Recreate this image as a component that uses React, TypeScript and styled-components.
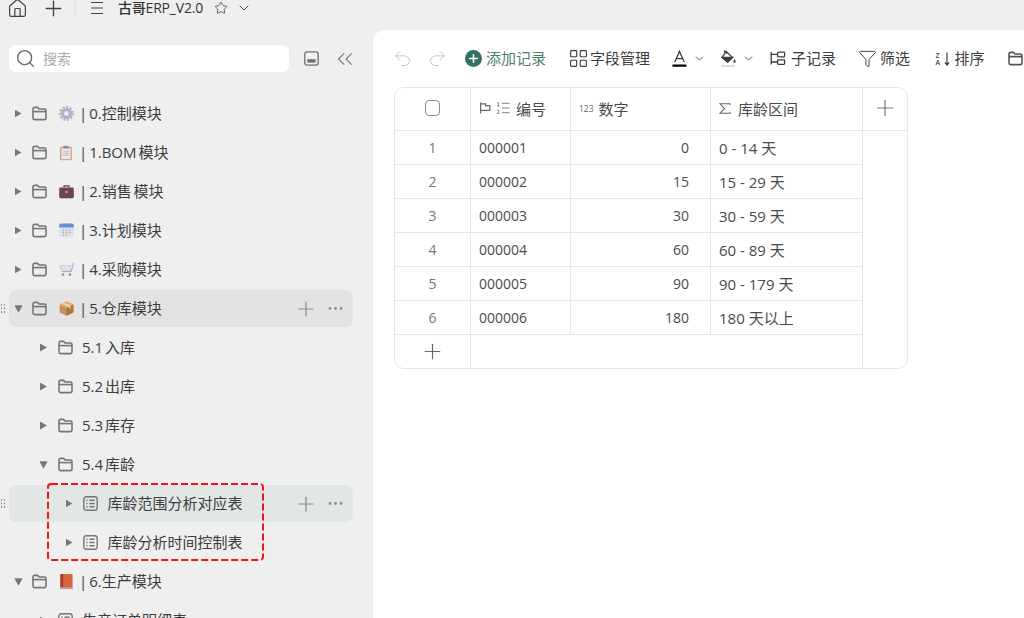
import React from "react";
import styled, { createGlobalStyle } from "styled-components";
import { House, Plus, Star, ChevronDown, Search, Undo2, Redo2, LayoutGrid, Funnel, ChevronsLeft, Ellipsis, ListOrdered } from "lucide-react";

const Global = createGlobalStyle`
  html, body { margin: 0; padding: 0; height: 100%; overflow: hidden; background: #efefef; }
  body { font-family: "Open Sans", "Noto Sans CJK SC", sans-serif; font-size: 15px; color: #3a3a3a; }
  * { box-sizing: border-box; }
`;

const Page = styled.div`
  width: 1024px; height: 618px; overflow: hidden; background: #efefef;
  display: flex; flex-direction: column;
`;
const TopBar = styled.div`
  height: 30px; flex: none; display: flex; align-items: flex-start; color: #444; padding-left: 6.5px;
`;
const TopIcon = styled.span<{ $ml?: number }>`
  display: inline-flex; height: 16px; align-items: center; margin-left: ${p => p.$ml ?? 0}px;
`;
const TopDivider = styled.span`
  width: 2px; height: 17px; background: #e6e6e6; margin-left: 8px;
`;
const Title = styled.span`
  font-size: 14px; line-height: 16px; font-weight: 500; margin-left: 13px; color: #333; white-space: nowrap;
  letter-spacing: -0.2px;
`;
const Body = styled.div`
  flex: 1; display: flex; min-height: 0;
`;
const Sidebar = styled.aside`
  width: 373px; flex: none; padding-top: 15px; display: flex; flex-direction: column; overflow: hidden;
`;
const SearchRow = styled.div`
  display: flex; align-items: center; padding-left: 9px; color: #777;
`;
const SearchBox = styled.div`
  width: 280px; height: 27px; border-radius: 6px; background: #fff; display: flex; align-items: center;
  padding-left: 6px; gap: 7px; color: #666; box-shadow: 0 0 0 1px #ececec;
`;
const Placeholder = styled.span`
  color: #aaa; font-size: 14px; padding-bottom: 2px;
`;
const Tree = styled.div`
  margin-top: 23px; display: flex; flex-direction: column; gap: 2px; position: relative;
`;
const Row = styled.div<{ $depth: number; $bg?: string }>`
  position: relative; flex: none; margin-left: 9px; width: 344px; height: 37px; border-radius: 7px;
  display: flex; align-items: center; padding-left: ${p => 5.5 + p.$depth * 25.5}px;
  background: ${p => p.$bg ?? "transparent"};
`;
const Arrow = styled.span<{ $open?: boolean }>`
  width: 7px; height: 8px; flex: none; margin-right: 10.5px; background: #777;
  clip-path: ${p => p.$open ? "polygon(0 12%, 100% 12%, 50% 88%)" : "polygon(0 0, 100% 50%, 0 100%)"};
  transform: ${p => p.$open ? "scale(1.2)" : "none"};
`;
const NodeIcon = styled.span`
  display: inline-flex; flex: none; color: #767676;
`;
const EmojiBox = styled.span`
  display: inline-flex; flex: none; margin-left: 11.5px; width: 15px; justify-content: center;
`;
const Label = styled.span<{ $ml: number }>`
  margin-left: ${p => p.$ml}px; white-space: nowrap; color: #3c3c3c; line-height: 20px;
  word-spacing: -2px; padding-bottom: 2px;
`;
const Actions = styled.span`
  margin-left: auto; padding-right: 8.5px; display: flex; align-items: center; gap: 7.5px; color: #8a8a8a;
`;
const Handle = styled.span`
  position: absolute; left: -9px; top: 13px; width: 6px; height: 11px;
  background-image: radial-gradient(circle, #8c8c8c 0.9px, transparent 1.1px);
  background-size: 3px 3.6px;
`;
const Callout = styled.svg`
  position: absolute; left: 47px; top: 388px; pointer-events: none; overflow: visible;
`;
const Main = styled.main`
  flex: 1; min-width: 0; background: #fff; border-top-left-radius: 12px; overflow: hidden; padding-left: 21px;
`;
const Toolbar = styled.div`
  height: 57px; display: flex; align-items: center; white-space: nowrap; color: #3c3c3c;
`;
const Tool = styled.span<{ $ml?: number; $color?: string; $gap?: number }>`
  display: inline-flex; align-items: center; gap: ${p => p.$gap ?? 5}px; flex: none; margin-left: ${p => p.$ml ?? 0}px;
  color: ${p => p.$color ?? "#3c3c3c"};
`;
const ToolText = styled.span`
  padding-bottom: 2px;
`;
const AddDot = styled.span`
  width: 17px; height: 17px; border-radius: 50%; background: #2f7263; color: #fff;
  display: inline-flex; align-items: center; justify-content: center; margin-right: -1px;
`;
const SortGlyph = styled.span`
  display: inline-flex; align-items: center; width: 14px; gap: 1px; color: #3c3c3c;
`;
const SortLetters = styled.span`
  display: flex; flex-direction: column; font-size: 7px; line-height: 7px; font-weight: 600; width: 7px;
`;
const Table = styled.div`
  width: 514px; border: 1px solid #e7e7ea; border-radius: 10px; overflow: hidden; display: grid;
  grid-template-columns: 76px 100px 140px 152px 44px;
  grid-template-rows: 43px repeat(6, 34px) 33px;
  color: #4a4a4a;
`;
const Cell = styled.div<{ $align?: string; $pr?: number; $last?: boolean; $span?: string; $size?: number; $noRight?: boolean }>`
  display: flex; align-items: center; white-space: nowrap; min-width: 0;
  justify-content: ${p => p.$align ?? "flex-start"};
  padding: 0 ${p => p.$pr ?? 9}px 0 ${p => (p.$align === "center" ? 0 : 8)}px;
  border-right: ${p => (p.$noRight ? "none" : "1px solid #e7e7ea")};
  border-bottom: ${p => (p.$last ? "none" : "1px solid #e7e7ea")};
  font-size: ${p => p.$size ?? 15}px;
  ${p => (p.$span ? `grid-column: ${p.$span};` : "")}
`;
const HeadCell = styled(Cell)`
  padding-bottom: 2px;
`;
const IndexCell = styled(Cell)`
  color: #777; font-size: 14px;
`;
const SideColumn = styled.div`
  grid-column: 5; grid-row: 2 / 9;
`;
const HeadIcons = styled.span<{ $mr?: number }>`
  display: inline-flex; align-items: center; gap: 4px; color: #666; margin-right: ${p => p.$mr ?? 5}px;
`;
const TypeTag = styled.span`
  font-size: 8.5px; color: #666; margin-right: 5px;
`;
const CheckBox = styled.span`
  width: 15.5px; height: 15.5px; border: 1.5px solid #8c8c92; border-radius: 4px;
`;

const FolderIcon = () => (
  <svg width="15" height="15" viewBox="0 0 15 15" fill="none" stroke="currentColor" strokeWidth="1.6">
    <path d="M1 3.2C1 2 1.7 1.4 2.6 1.4H5.6L7 3H12.4C13.4 3 14 3.7 14 4.6V12C14 13 13.4 13.6 12.4 13.6H2.6C1.7 13.6 1 13 1 12Z" />
    <path d="M1 5.6H14" />
  </svg>
);
const ListIcon = () => (
  <svg width="15" height="15" viewBox="0 0 15 15" fill="none" stroke="currentColor" strokeWidth="1.4">
    <rect x="0.8" y="0.8" width="13.4" height="13.4" rx="2.4" />
    <path d="M6.4 4.3H11.6M6.4 7.5H11.6M6.4 10.7H11.6M3.4 4.3H4.6M3.4 7.5H4.6M3.4 10.7H4.6" />
  </svg>
);
const Gear = () => (
  <svg width="15" height="15" viewBox="0 0 15 15">
    <circle cx="7.5" cy="7.5" r="5.6" fill="#b3afc6" />
    <circle cx="7.5" cy="7.5" r="6.5" fill="none" stroke="#b3afc6" strokeWidth="2" strokeDasharray="2 1.7" />
    <circle cx="7.5" cy="7.5" r="2.4" fill="#efeaf5" />
  </svg>
);
const Clipboard = () => (
  <svg width="14" height="16" viewBox="0 0 15 16">
    <rect x="1" y="1.4" width="13" height="14.4" rx="1.2" fill="#d9a77c" />
    <rect x="2.6" y="3" width="9.8" height="11.4" fill="#eceaf0" />
    <rect x="4.6" y="0.2" width="5.8" height="3" rx="0.8" fill="#8f8f9c" />
    <path d="M4 6H11M4 8.2H11M4 10.4H11" stroke="#b9b9c4" />
  </svg>
);
const Briefcase = () => (
  <svg width="15" height="15" viewBox="0 0 15 15">
    <path d="M5 3.6V1.8H10V3.6" fill="none" stroke="#6b4450" strokeWidth="1.2" />
    <rect x="0.2" y="3.4" width="14.6" height="10.8" rx="1.4" fill="#6d4451" />
    <rect x="6.3" y="7" width="2.4" height="2" fill="#d6a65f" />
  </svg>
);
const Calendar = () => (
  <svg width="15" height="15" viewBox="0 0 15 15">
    <rect x="0.2" y="0.6" width="14.6" height="14" rx="2" fill="#dfe0ee" />
    <path d="M0.2 4.6V2.6C0.2 1.5 1 0.6 2.2 0.6H12.8C14 0.6 14.8 1.5 14.8 2.6V4.6Z" fill="#6a8fd6" />
    <path d="M3.5 7H5M6.8 7H8.3M10 7H11.5M3.5 9.4H5M6.8 9.4H8.3M10 9.4H11.5M3.5 11.8H5M6.8 11.8H8.3" stroke="#a6a6b8" strokeWidth="1.2" />
  </svg>
);
const Cart = () => (
  <svg width="15" height="15" viewBox="0 0 15 15" fill="none">
    <path d="M14.6 0.6L12.2 9.6H2.8" stroke="#9aa6bd" strokeWidth="1" />
    <path d="M0.4 3H12.8L11.4 8.4H1.6Z" fill="#c9cdd8" />
    <path d="M2 5H12M2.4 6.8H11.6M4 3V8.4M6.5 3V8.4M9 3V8.4" stroke="#eeeff4" strokeWidth="0.7" />
    <circle cx="4" cy="12.6" r="1.3" fill="#6f96d8" />
    <circle cx="11" cy="12.6" r="1.3" fill="#6f96d8" />
  </svg>
);
const Box = () => (
  <svg width="15" height="15" viewBox="0 0 15 15">
    <path d="M7.5 0.4L14.4 3.6V11.4L7.5 14.8L0.6 11.4V3.6Z" fill="#c99159" />
    <path d="M7.5 7L14.4 3.6V11.4L7.5 14.8Z" fill="#ab7440" />
    <path d="M7.5 0.4L14.4 3.6L7.5 7L0.6 3.6Z" fill="#e1b07e" />
    <path d="M4 2L10.8 5.3V7.4" stroke="#f1e2c7" strokeWidth="1.3" fill="none" />
  </svg>
);
const Book = () => (
  <svg width="13" height="15" viewBox="0 0 13 15">
    <rect x="0.4" y="0" width="12.2" height="14.2" rx="0.8" fill="#d4683a" />
    <rect x="0.4" y="0" width="2.8" height="14.2" fill="#a63e2e" />
    <rect x="0.4" y="13" width="12.2" height="2" fill="#c890a8" />
  </svg>
);
const Bucket = () => (
  <svg width="17" height="18" viewBox="0 0 17 18" fill="none" stroke="#3c3c3c" strokeWidth="1.3">
    <path d="M6 1.2L12.4 7.4L7.6 12L2.2 7.4Z" />
    <path d="M2.2 7.4H12.4L7.6 12Z" fill="#3c3c3c" />
    <path d="M4 0.8L7 3.6" />
    <path d="M14.6 9.2C15.4 10.4 15.8 11 15.8 11.6A1.2 1.2 0 0 1 13.4 11.6C13.4 11 13.8 10.4 14.6 9.2Z" fill="#3c3c3c" stroke="none" />
    <path d="M1 16H15" stroke="#d9d9d9" strokeWidth="2" />
  </svg>
);
const SubRecord = () => (
  <svg width="16" height="15" viewBox="0 0 16 15" fill="none" stroke="#3c3c3c" strokeWidth="1.3">
    <path d="M1.2 1V13.4M1.2 3.4H7.6M1.2 11H7.6" />
    <rect x="7.6" y="1.2" width="7" height="4.6" rx="0.8" />
    <rect x="7.6" y="8.8" width="7" height="4.6" rx="0.8" />
  </svg>
);
const TextColor = () => (
  <svg width="15" height="18" viewBox="0 0 15 18" fill="none" stroke="#3c3c3c" strokeWidth="1.3">
    <path d="M2.8 12L7.5 1.4L12.2 12M4.4 8.6H10.6" />
    <path d="M0.5 15.6H14.5" stroke="#000" strokeWidth="2.4" />
  </svg>
);
const ToggleBox = () => (
  <svg width="15" height="15" viewBox="0 0 15 15" fill="none" stroke="#707070" strokeWidth="1.3">
    <rect x="0.8" y="0.8" width="13.4" height="13.4" rx="2.4" />
    <rect x="3.4" y="8.2" width="8.2" height="3.4" fill="#707070" stroke="none" />
  </svg>
);
const FlagIcon = () => (
  <svg width="12" height="12" viewBox="0 0 12 12" fill="none" stroke="currentColor" strokeWidth="1.2">
    <path d="M1.6 0.6V11.6M1.6 1.8H6.6V3.6H10.8V8.4H1.6" />
  </svg>
);
const SigmaIcon = () => (
  <svg width="12" height="11" viewBox="0 0 12 11" fill="none" stroke="currentColor" strokeWidth="1.1">
    <path d="M11 2V0.8H1L5.6 5.5L1 10.2H11V9" />
  </svg>
);
const SortArrow = () => (
  <svg width="6" height="14" viewBox="0 0 6 14" fill="none" stroke="currentColor" strokeWidth="1.2">
    <path d="M3 0.6V13M0.8 10.4L3 13L5.2 10.4" />
  </svg>
);

type Node = { label: string; depth: number; open?: boolean; kind?: "folder" | "list"; emoji?: React.ReactNode; bg?: string; actions?: boolean };

const nodes: Node[] = [
  { label: "| 0.控制模块", depth: 0, emoji: <Gear /> },
  { label: "| 1.BOM 模块", depth: 0, emoji: <Clipboard /> },
  { label: "| 2.销售 模块", depth: 0, emoji: <Briefcase /> },
  { label: "| 3.计划模块", depth: 0, emoji: <Calendar /> },
  { label: "| 4.采购模块", depth: 0, emoji: <Cart /> },
  { label: "| 5.仓库模块", depth: 0, open: true, emoji: <Box />, bg: "#e3e3e3", actions: true },
  { label: "5.1 入库", depth: 1 },
  { label: "5.2 出库", depth: 1 },
  { label: "5.3 库存", depth: 1 },
  { label: "5.4 库龄", depth: 1, open: true },
  { label: "库龄范围分析对应表", depth: 2, kind: "list", bg: "#e2e7e5", actions: true },
  { label: "库龄分析时间控制表", depth: 2, kind: "list" },
  { label: "| 6.生产模块", depth: 0, open: true, emoji: <Book /> },
  { label: "生产订单明细表", depth: 1, kind: "list" },
];

const records = [
  ["000001", "0", "0 - 14 天"],
  ["000002", "15", "15 - 29 天"],
  ["000003", "30", "30 - 59 天"],
  ["000004", "60", "60 - 89 天"],
  ["000005", "90", "90 - 179 天"],
  ["000006", "180", "180 天以上"],
];

export default function App() {
  return (
    <Page>
      <Global />
      <TopBar>
        <TopIcon><House size={21} strokeWidth={1.4} /></TopIcon>
        <TopIcon $ml={13.5}><Plus size={25} strokeWidth={1.3} /></TopIcon>
        <TopDivider />
        <TopIcon $ml={13}>
          <svg width="16" height="14" viewBox="0 0 16 14" stroke="currentColor" strokeWidth="1.2"><path d="M2 1.5H14M2 7H14M2 12.5H14" /></svg>
        </TopIcon>
        <Title>古哥ERP_V2.0</Title>
        <TopIcon $ml={11}><Star size={14} strokeWidth={1.4} /></TopIcon>
        <TopIcon $ml={8}><ChevronDown size={16} strokeWidth={1.5} /></TopIcon>
      </TopBar>
      <Body>
        <Sidebar>
          <SearchRow>
            <SearchBox>
              <Search size={21} strokeWidth={1.5} />
              <Placeholder>搜索</Placeholder>
            </SearchBox>
            <TopIcon $ml={15}><ToggleBox /></TopIcon>
            <TopIcon $ml={13}><ChevronsLeft size={26} strokeWidth={1} /></TopIcon>
          </SearchRow>
          <Tree>
            {nodes.map(n => (
              <Row key={n.label} $depth={n.depth} $bg={n.bg}>
                {n.actions && <Handle />}
                <Arrow $open={n.open} />
                <NodeIcon>{n.kind === "list" ? <ListIcon /> : <FolderIcon />}</NodeIcon>
                {n.emoji && <EmojiBox>{n.emoji}</EmojiBox>}
                <Label $ml={n.emoji ? 5.5 : 9.5}>{n.label}</Label>
                {n.actions && (
                  <Actions>
                    <Plus size={24} strokeWidth={1.2} />
                    <Ellipsis size={19} strokeWidth={1.5} />
                  </Actions>
                )}
              </Row>
            ))}
            <Callout width="217" height="78" viewBox="0 0 217 78" fill="none">
              <rect x="1" y="1" width="215" height="76" rx="3" stroke="#f01414" strokeWidth="2" strokeDasharray="7 3" />
            </Callout>
          </Tree>
        </Sidebar>
        <Main>
          <Toolbar>
            <Tool $ml={-2} $color="#c4c4c4"><Undo2 size={21} strokeWidth={1.1} /></Tool>
            <Tool $ml={13.5} $color="#c4c4c4"><Redo2 size={21} strokeWidth={1.1} /></Tool>
            <Tool $ml={17.5} $color="#4f8072"><AddDot><Plus size={13} strokeWidth={3} /></AddDot><ToolText>添加记录</ToolText></Tool>
            <Tool $ml={21.5} $gap={1.5}><LayoutGrid size={21} strokeWidth={1.3} /><ToolText>字段管理</ToolText></Tool>
            <Tool $ml={22} $gap={6}><TextColor /><ChevronDown size={13} strokeWidth={1.5} /></Tool>
            <Tool $ml={13.5} $gap={5.5}><Bucket /><ChevronDown size={13} strokeWidth={1.5} /></Tool>
            <Tool $ml={15}><SubRecord /><ToolText>子记录</ToolText></Tool>
            <Tool $ml={22} $gap={3}><Funnel size={19} strokeWidth={1.2} /><ToolText>筛选</ToolText></Tool>
            <Tool $ml={25.5} $gap={5}>
              <SortGlyph>
                <SortLetters><span>Z</span><span>A</span></SortLetters>
                <SortArrow />
              </SortGlyph>
              <ToolText>排序</ToolText>
            </Tool>
            <Tool $ml={23.5} $color="#555"><FolderIcon /></Tool>
          </Toolbar>
          <Table>
            <HeadCell $align="center" $pr={0}><CheckBox /></HeadCell>
            <HeadCell>
              <HeadIcons><FlagIcon /><ListOrdered size={16} strokeWidth={1.2} /></HeadIcons>编号
            </HeadCell>
            <HeadCell><TypeTag>123</TypeTag>数字</HeadCell>
            <HeadCell><HeadIcons $mr={7}><SigmaIcon /></HeadIcons>库龄区间</HeadCell>
            <HeadCell $align="center" $pr={0} $noRight><Plus size={26} strokeWidth={1.1} color="#777" /></HeadCell>
            {records.map((r, i) => (
              <React.Fragment key={r[0]}>
                <IndexCell $align="center" $pr={0}>{i + 1}</IndexCell>
                <Cell $size={14}>{r[0]}</Cell>
                <Cell $align="flex-end" $pr={21} $size={14}>{r[1]}</Cell>
                <Cell>{r[2]}</Cell>
              </React.Fragment>
            ))}
            <IndexCell $align="center" $pr={0} $last><Plus size={25} strokeWidth={1.1} color="#666" /></IndexCell>
            <Cell $span="2 / 5" $last />
            <SideColumn />
          </Table>
        </Main>
      </Body>
    </Page>
  );
}
